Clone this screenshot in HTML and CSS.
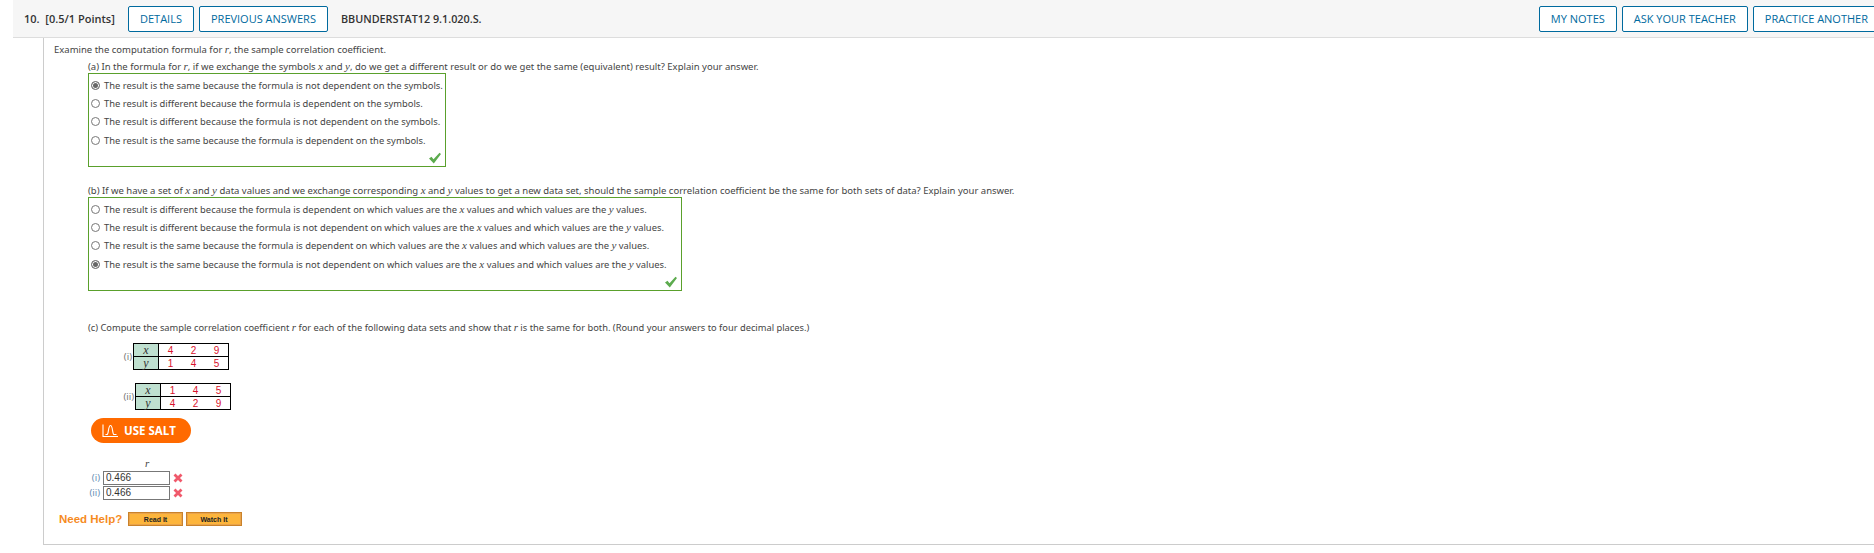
FILE: index.html
```html
<!DOCTYPE html>
<html lang="en">

<head>
    <meta charset="UTF-8">
    <meta name="viewport" content="width=device-width, initial-scale=1.0">
    <title>Question 10</title>
    <link rel="stylesheet" href="styles.css">
</head>

<body>

    <div class="question-bar">
        <strong class="question-points">10. &nbsp;[0.5/1 Points]</strong>
        <button class="bar-btn">DETAILS</button>
        <button class="bar-btn">PREVIOUS ANSWERS</button>
        <strong class="question-code">BBUNDERSTAT12 9.1.020.S.</strong>
        <div class="bar-right">
            <button class="bar-btn">MY NOTES</button>
            <button class="bar-btn">ASK YOUR TEACHER</button>
            <button class="bar-btn">PRACTICE ANOTHER</button>
        </div>
    </div>

    <div class="question-body">
        <p class="intro">Examine the computation formula for <i>r</i>, the sample correlation coefficient.</p>

        <div class="part">
            <p class="part-text">(a) In the formula for <i>r</i>, if we exchange the symbols <i>x</i> and <i>y</i>, do we get a different result or do we get the same (equivalent) result? Explain your answer.</p>
            <div class="answer-box box-a">
                <label class="option"><input type="radio" name="a" checked><span>The result is the same because the formula is not dependent on the symbols.</span></label>
                <label class="option"><input type="radio" name="a"><span>The result is different because the formula is dependent on the symbols.</span></label>
                <label class="option"><input type="radio" name="a"><span>The result is different because the formula is not dependent on the symbols.</span></label>
                <label class="option"><input type="radio" name="a"><span>The result is the same because the formula is dependent on the symbols.</span></label>
                <div class="check-row">
                    <svg width="14" height="12" viewBox="0 0 14 12"><path d="M1 6.5 L3.5 4.8 L5.5 7.2 L11.5 0.8 L13 2 L5.8 11.5 Z" fill="#5cab4e"/></svg>
                </div>
            </div>
        </div>

        <div class="part part-b">
            <p class="part-text">(b) If we have a set of <i>x</i> and <i>y</i> data values and we exchange corresponding <i>x</i> and <i>y</i> values to get a new data set, should the sample correlation coefficient be the same for both sets of data? Explain your answer.</p>
            <div class="answer-box box-b">
                <label class="option"><input type="radio" name="b"><span>The result is different because the formula is dependent on which values are the <i>x</i> values and which values are the <i>y</i> values.</span></label>
                <label class="option"><input type="radio" name="b"><span>The result is different because the formula is not dependent on which values are the <i>x</i> values and which values are the <i>y</i> values.</span></label>
                <label class="option"><input type="radio" name="b"><span>The result is the same because the formula is dependent on which values are the <i>x</i> values and which values are the <i>y</i> values.</span></label>
                <label class="option"><input type="radio" name="b" checked><span>The result is the same because the formula is not dependent on which values are the <i>x</i> values and which values are the <i>y</i> values.</span></label>
                <div class="check-row">
                    <svg width="14" height="12" viewBox="0 0 14 12"><path d="M1 6.5 L3.5 4.8 L5.5 7.2 L11.5 0.8 L13 2 L5.8 11.5 Z" fill="#5cab4e"/></svg>
                </div>
            </div>
        </div>

        <div class="part part-c">
            <p class="part-text">(c) Compute the sample correlation coefficient <i>r</i> for each of the following data sets and show that <i>r</i> is the same for both. (Round your answers to four decimal places.)</p>

            <div class="data-set set-i">
                <span class="set-label">(i)</span>
                <table class="data-table">
                    <tr><th>x</th><td>4</td><td>2</td><td>9</td></tr>
                    <tr><th>y</th><td>1</td><td>4</td><td>5</td></tr>
                </table>
            </div>
            <div class="data-set set-ii">
                <span class="set-label">(ii)</span>
                <table class="data-table">
                    <tr><th>x</th><td>1</td><td>4</td><td>5</td></tr>
                    <tr><th>y</th><td>4</td><td>2</td><td>9</td></tr>
                </table>
            </div>

            <button class="salt-btn">
                <svg width="16" height="13" viewBox="0 0 16 13" fill="none" stroke="#fff" stroke-width="1.1"><path d="M1 0.5 V12.5 H16"/><path d="M3.5 10.5 H5 C6.8 10.5 6 1.5 8.5 1.5 C11 1.5 10.2 10.5 12 10.5 H14.5"/></svg>
                USE SALT
            </button>

            <div class="r-answers">
                <div class="r-head"><i>r</i></div>
                <div class="r-row">
                    <span class="r-label">(i)</span>
                    <input class="r-input" type="text" value="0.466">
                    <svg width="10" height="10" viewBox="0 0 10 10"><path d="M1.5 1.5 L8.5 8.5 M8.5 1.5 L1.5 8.5" stroke="#f0596b" stroke-width="2.8"/></svg>
                </div>
                <div class="r-row">
                    <span class="r-label">(ii)</span>
                    <input class="r-input" type="text" value="0.466">
                    <svg width="10" height="10" viewBox="0 0 10 10"><path d="M1.5 1.5 L8.5 8.5 M8.5 1.5 L1.5 8.5" stroke="#f0596b" stroke-width="2.8"/></svg>
                </div>
            </div>

            <div class="need-help">
                <span class="need-help-text">Need Help?</span>
                <button class="help-btn read-btn">Read It</button>
                <button class="help-btn watch-btn">Watch It</button>
            </div>
        </div>
    </div>

</body>

</html>
```

FILE: styles.css
```css
body {
    margin: 0;
    overflow: hidden;
    background-color: #fff;
    font-family: "Open Sans", "Noto Sans", sans-serif;
    color: #333;
}

p {
    margin: 0;
}

i {
    font-family: "Liberation Serif", serif;
    font-size: 11px;
}

.question-bar {
    display: flex;
    align-items: center;
    height: 37px;
    margin-left: 13px;
    margin-right: -6px;
    padding-left: 11px;
    background-color: #f6f6f6;
    border-bottom: 1px solid #ddd;
    font-size: 11px;
}

.question-points {
    width: 104px;
    font-weight: 600;
    white-space: nowrap;
}

.question-code {
    margin-left: 8px;
    font-size: 10.8px;
    font-weight: 600;
}

.bar-btn {
    height: 26px;
    padding: 0 11px;
    margin-right: 5px;
    background-color: #fff;
    border: 1px solid #006a9e;
    border-radius: 2px;
    font-family: "Open Sans", "Noto Sans", sans-serif;
    font-size: 11px;
    color: #006a9e;
    white-space: nowrap;
}

.bar-right {
    display: flex;
    margin-left: auto;
}

.bar-right .bar-btn:last-child {
    margin-right: 0;
}

.question-body {
    height: 506px;
    margin-left: 43px;
    padding-left: 10px;
    border-left: 1px solid #ccc;
    border-bottom: 1px solid #ccc;
    font-family: "Noto Sans", sans-serif;
    font-size: 9.5px;
    color: #444;
}

.intro {
    padding-top: 4px;
    line-height: 14px;
}

.part {
    margin-left: 34px;
}

.part-text {
    margin-top: 3px;
    line-height: 13px;
}

.part-b {
    margin-top: 17px;
}

.part-c {
    margin-top: 30px;
}

.part-c .part-text {
    font-size: 9.3px;
}

.answer-box {
    padding-top: 2px;
    border: 1px solid #5aa02c;
    box-sizing: border-box;
}

.box-a {
    width: 358px;
    height: 94px;
}

.box-b {
    width: 594px;
    height: 94px;
}

.option {
    display: flex;
    align-items: center;
    height: 18.4px;
    padding-left: 2px;
    font-size: 9.4px;
    white-space: nowrap;
}

.option input {
    appearance: none;
    width: 9px;
    height: 9px;
    margin: 0 4px 0 0;
    background-color: #fff;
    border: 1px solid #777;
    border-radius: 50%;
    flex-shrink: 0;
}

.option input:checked {
    background-color: #666;
    box-shadow: inset 0 0 0 1px #fff;
}

.check-row {
    display: flex;
    justify-content: flex-end;
    padding: 2px 3px 0 0;
}

.data-set {
    display: flex;
    align-items: center;
    justify-content: flex-end;
    color: #777;
}

.set-i {
    width: 141px;
    margin-top: 9px;
}

.set-ii {
    width: 143px;
    margin-top: 13px;
}

.set-label {
    margin-right: 1px;
}

.data-table {
    border-collapse: collapse;
    border: 1px solid #000;
    font-family: "Liberation Sans", sans-serif;
    font-size: 10px;
}

.data-table th {
    width: 24px;
    height: 12px;
    padding: 0;
    background-color: #bfe0d0;
    border: 1px solid #000;
    font-family: "Liberation Serif", serif;
    font-style: italic;
    font-weight: normal;
    font-size: 12px;
    line-height: 11px;
    color: #333;
}

.data-table td {
    width: 23px;
    height: 12px;
    padding: 0;
    text-align: center;
    color: #d8122c;
    line-height: 11px;
    border-top: 1px solid #000;
    border-bottom: 1px solid #000;
}

.salt-btn {
    display: flex;
    align-items: center;
    gap: 6px;
    width: 100px;
    height: 25px;
    margin-top: 8px;
    margin-left: 3px;
    padding: 0 0 0 11px;
    background-color: #ff6a00;
    border: none;
    border-radius: 13px;
    font-family: "Open Sans", sans-serif;
    font-size: 11.5px;
    font-weight: 700;
    color: #fff;
}

.r-answers {
    width: 140px;
    margin-top: 14px;
    margin-left: -30px;
}

.r-head {
    padding-left: 87px;
    line-height: 12px;
}

.r-row {
    display: flex;
    align-items: center;
    gap: 3px;
    height: 15px;
}

.r-label {
    width: 42px;
    text-align: right;
    color: #6a8fb5;
}

.r-input {
    width: 67px;
    height: 14px;
    padding: 0 2px;
    box-sizing: border-box;
    border: 1px solid #777;
    font-family: "Liberation Sans", sans-serif;
    font-size: 10px;
    color: #333;
}

.need-help {
    display: flex;
    align-items: center;
    gap: 3px;
    margin-top: 12px;
    margin-left: -29px;
}

.need-help-text {
    width: 66px;
    font-family: "Liberation Sans", sans-serif;
    font-size: 11.5px;
    font-weight: 700;
    color: #f68b1f;
    white-space: nowrap;
}

.help-btn {
    height: 14px;
    padding: 0;
    background-color: #fdb53c;
    border: 1px solid #c9822b;
    box-shadow: inset 0 0 0 1px #e9a34a;
    font-family: "Liberation Sans", sans-serif;
    font-size: 7px;
    font-weight: 700;
    color: #222;
}

.read-btn {
    width: 55px;
}

.watch-btn {
    width: 56px;
}
```
